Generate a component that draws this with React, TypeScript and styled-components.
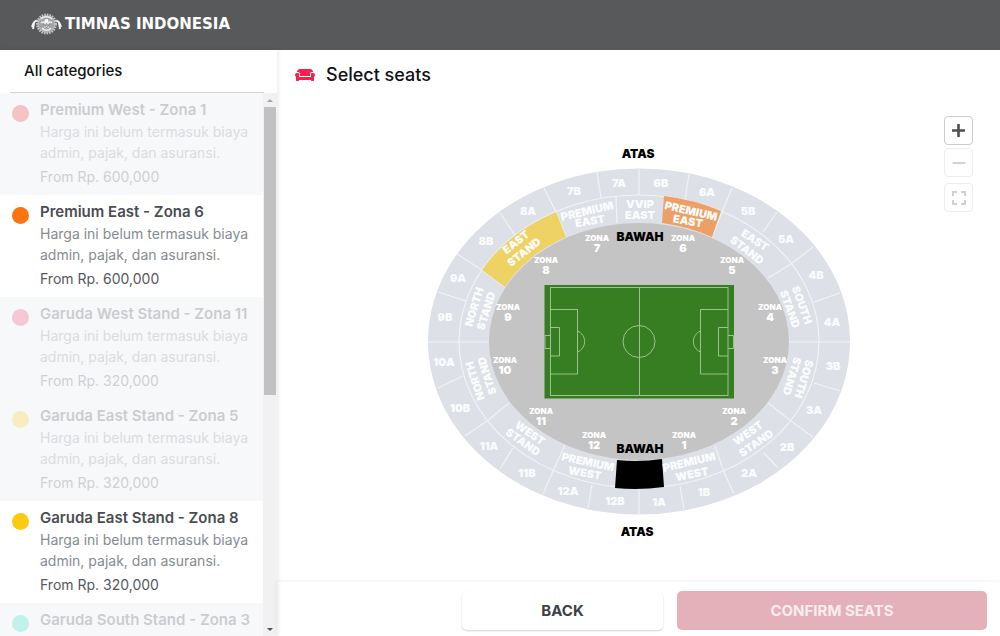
import React from "react";
import styled, { createGlobalStyle } from "styled-components";
import { FaCouch } from "react-icons/fa";
import { MdFullscreen, MdRemove } from "react-icons/md";

const GlobalStyle = createGlobalStyle`
  *, *::before, *::after { box-sizing: border-box; }
  body {
    margin: 0;
    font-family: Inter, "Liberation Sans", sans-serif;
    font-size: 14px;
    color: #101214;
    background: #fff;
  }
  h1, h2, h3, p, ul { margin: 0; padding: 0; }
  button { font: inherit; cursor: pointer; }
  button:disabled { cursor: default; }
`;

const Page = styled.div`
  display: flex;
  flex-direction: column;
  height: 100vh;
`;

const TopBar = styled.header`
  display: flex;
  align-items: center;
  flex: none;
  height: 50px;
  padding: 0 31px 3px;
  background: #58595b;
`;

const Brand = styled.a`
  display: flex;
  align-items: center;
  gap: 3px;
  color: #fff;
  font-family: "DejaVu Sans", sans-serif;
  font-size: 15px;
  font-weight: 700;
  line-height: 20px;
  text-decoration: none;
  white-space: nowrap;
`;

const Body = styled.div`
  display: flex;
  flex: 1;
  min-height: 0;
`;

const Sidebar = styled.aside`
  display: flex;
  flex-direction: column;
  flex: none;
  width: 277px;
  box-shadow: 1px 0 4px rgba(0, 0, 0, 0.1);
`;

const SidebarTitle = styled.h2`
  flex: none;
  margin: 0 13px 0 10px;
  padding: 10px 14px 11px;
  border-bottom: 1px solid #d3d4d6;
  font-size: 15px;
  font-weight: 500;
  line-height: 21px;
`;

const ListArea = styled.div`
  display: flex;
  flex: 1;
  min-height: 0;
`;

const CategoryList = styled.ul`
  flex: 1;
  min-width: 0;
  overflow: hidden;
  list-style: none;
`;

const Category = styled.li<{ $off: boolean }>`
  display: flex;
  align-items: flex-start;
  gap: 11px;
  padding: 6px 0 8px 12px;
  background: ${(p) => (p.$off ? "#f7f8fa" : "#fff")};

  & > * {
    opacity: ${(p) => (p.$off ? 0.25 : 1)};
  }
`;

const Dot = styled.span<{ $color: string }>`
  flex: none;
  width: 17px;
  height: 17px;
  margin-top: 6px;
  border-radius: 50%;
  background: ${(p) => p.$color};
`;

const CategoryText = styled.div`
  min-width: 0;
  line-height: 21px;
`;

const CategoryName = styled.h3`
  color: #4a4d52;
  font-size: 15px;
  font-weight: 600;
  line-height: 22px;
  white-space: nowrap;
`;

const CategoryNote = styled.p`
  color: #868b91;
`;

const CategoryPrice = styled.p`
  padding-top: 3px;
  color: #55585d;
`;

const ScrollTrack = styled.div`
  display: flex;
  flex-direction: column;
  align-items: center;
  flex: none;
  width: 14px;
  background: #f1f1f1;
`;

const ScrollThumb = styled.div`
  width: 12px;
  height: 53%;
  background: #c1c1c1;
`;

const ScrollArrow = styled.span<{ $down?: boolean }>`
  flex: none;
  width: 6px;
  height: 3px;
  margin: ${(p) => (p.$down ? "auto 0 5px" : "6px 0 5px")};
  clip-path: ${(p) =>
    p.$down ? "polygon(0 0, 100% 0, 50% 100%)" : "polygon(50% 0, 100% 100%, 0 100%)"};
  background: ${(p) => (p.$down ? "#505050" : "#a3a3a3")};
`;

const Main = styled.main`
  display: flex;
  flex-direction: column;
  flex: 1;
  min-width: 0;
`;

const Heading = styled.h1`
  display: flex;
  align-items: center;
  gap: 11px;
  flex: none;
  height: 48px;
  padding: 2px 18px 0;
  font-size: 18px;
  font-weight: 500;
  line-height: 24px;

  svg {
    color: #fb1f4b;
  }
`;

const MapArea = styled.section`
  position: relative;
  display: flex;
  align-items: center;
  justify-content: center;
  flex: 1;
  min-height: 0;
`;

const Stadium = styled.svg`
  width: 441px;
  max-width: 100%;
  max-height: 100%;
  font-family: Inter, "Liberation Sans", sans-serif;
  font-weight: 900;
  text-anchor: middle;
`;

const MapTools = styled.div`
  position: absolute;
  top: 18px;
  right: 27px;
  display: flex;
  flex-direction: column;
  gap: 3px;
`;

const ToolButton = styled.button<{ $apart?: boolean }>`
  display: flex;
  align-items: center;
  justify-content: center;
  width: 29px;
  height: 29px;
  margin-top: ${(p) => (p.$apart ? "3px" : "0")};
  padding: 0;
  border: 1px solid #c9cbce;
  border-radius: 4px;
  background: #fff;
  color: #4d4f53;

  &:disabled {
    border-color: #ececee;
    color: #cfcfd1;
  }
`;

const Footer = styled.footer`
  display: flex;
  justify-content: flex-end;
  gap: 14px;
  flex: none;
  padding: 9px 13px 6px;
  box-shadow: 0 -1px 4px rgba(0, 0, 0, 0.06);
`;

const ActionButton = styled.button<{ $primary?: boolean }>`
  width: ${(p) => (p.$primary ? "310px" : "201px")};
  height: 39px;
  padding: 0 0 1px;
  border: 0;
  border-radius: 5px;
  background: ${(p) => (p.$primary ? "#e4b1ba" : "#fff")};
  box-shadow: ${(p) => (p.$primary ? "none" : "0 1px 2px rgba(0, 0, 0, 0.18)")};
  color: ${(p) => (p.$primary ? "#fcedef" : "#3c4145")};
  font-size: 15px;
  font-weight: 700;
`;

const note = "Harga ini belum termasuk biaya admin, pajak, dan asuransi.";

const categories = [
  { name: "Premium West - Zona 1", price: "600,000", color: "#f0202c", off: true },
  { name: "Premium East - Zona 6", price: "600,000", color: "#fb7412", off: false },
  { name: "Garuda West Stand - Zona 11", price: "320,000", color: "#f0386a", off: true },
  { name: "Garuda East Stand - Zona 5", price: "320,000", color: "#fcca12", off: true },
  { name: "Garuda East Stand - Zona 8", price: "320,000", color: "#fcca12", off: false },
  { name: "Garuda South Stand - Zona 3", price: "320,000", color: "#1fdcc0", off: true },
];

type Point = [number, number];
type Label = [string, number, number, number?];

const dividers: Point[][] = [
  [[438, 292], [466, 301]],
  [[457, 254], [482, 270], [505, 287]],
  [[500, 213], [515, 235]],
  [[544, 188], [556, 212], [566, 237]],
  [[597, 172], [601, 198]],
  [[616, 196], [617, 223]],
  [[639, 169], [639, 195]],
  [[689, 174], [685, 200]],
  [[732, 188], [722, 212], [712, 237]],
  [[777, 212], [763, 232]],
  [[813, 247], [791, 264], [768, 278]],
  [[840, 293], [814, 302]],
  [[428, 342], [489, 342]],
  [[789, 342], [850, 342]],
  [[840, 391], [814, 383]],
  [[813, 437], [791, 421], [768, 403]],
  [[778, 468], [764, 453]],
  [[734, 494], [724, 472], [715, 446]],
  [[684, 509], [680, 486]],
  [[639, 488], [639, 514]],
  [[588, 508], [592, 485]],
  [[543, 494], [553, 471], [565, 445]],
  [[500, 469], [513, 448]],
  [[465, 436], [487, 421], [509, 403]],
  [[438, 388], [463, 376]],
];

const blocks: Label[] = [
  ["7B", 574, 191], ["7A", 619, 183], ["6B", 661, 183], ["6A", 707, 192],
  ["8A", 528, 211], ["5B", 748, 211], ["8B", 486, 241], ["5A", 786, 239],
  ["9A", 458, 278], ["4B", 816, 275], ["9B", 445, 317], ["4A", 832, 322],
  ["10A", 444, 362], ["3B", 833, 366], ["10B", 460, 408], ["3A", 814, 410],
  ["11A", 489, 446], ["2B", 787, 447], ["11B", 527, 473], ["2A", 749, 473],
  ["12A", 568, 491], ["1B", 704, 492], ["12B", 615, 501], ["1A", 659, 502],
];

const stands: Label[] = [
  ["PREMIUM", 587, 211, -13], ["EAST", 590, 221, -9],
  ["VVIP", 640, 204], ["EAST", 640, 215],
  ["PREMIUM", 691, 211, 13], ["EAST", 688, 221, 10],
  ["EAST", 755, 240, 33], ["STAND", 747, 250, 38],
  ["SOUTH", 802, 305, 70], ["STAND", 790, 309, 70],
  ["SOUTH", 804, 379, 107], ["STAND", 792, 376, 107],
  ["NORTH", 474, 307, -73], ["STAND", 486, 311, -73],
  ["NORTH", 475, 381, -108], ["STAND", 487, 376, -108],
  ["EAST", 516, 242, -38], ["STAND", 524, 252, -38],
  ["WEST", 530, 433, 35], ["STAND", 523, 442, 35],
  ["PREMIUM", 588, 462, 12], ["WEST", 585, 473, 10],
  ["PREMIUM", 689, 462, -13], ["WEST", 692, 474, -11],
  ["WEST", 748, 433, -35], ["STAND", 756, 443, -35],
];

const zones: Label[] = [
  ["7", 597, 238], ["6", 683, 238], ["8", 546, 260], ["5", 732, 260],
  ["9", 508, 307], ["4", 770, 307], ["10", 505, 360], ["3", 775, 360],
  ["11", 541, 411], ["2", 734, 411], ["12", 594, 435], ["1", 684, 435],
];

const captions: Label[] = [
  ["ATAS", 638, 154], ["BAWAH", 640, 237], ["BAWAH", 640, 449], ["ATAS", 637, 532],
];

function Labels({ items, size, fill }: { items: Label[]; size: number; fill: string }) {
  const drop = Math.round(size * 0.36);
  return (
    <g fontSize={size} fill={fill}>
      {items.map(([text, x, y, angle = 0], i) => (
        <text key={i} transform={`translate(${x} ${y}) rotate(${angle})`} y={drop}>
          {text}
        </text>
      ))}
    </g>
  );
}

function StadiumMap() {
  return (
    <Stadium viewBox="418 139 441 402" role="img" aria-label="Stadium seat map">
      <ellipse cx="639" cy="341.5" rx="211" ry="173" fill="#dde0e6" />
      <ellipse cx="639" cy="341.5" rx="150" ry="118.5" fill="#c4c4c4" />
      <g fill="none" stroke="#f1f2f5" strokeWidth="1.2">
        <ellipse cx="639" cy="341.5" rx="180" ry="146.5" />
        {dividers.map((line, i) => (
          <polyline key={i} points={line.map((p) => p.join(",")).join(" ")} />
        ))}
      </g>
      <path d="M482 270A180 146.5 0 0 1 556 212L566 237A150 118.5 0 0 0 505 287Z" fill="#efd264" />
      <path d="M664 196A180 146.5 0 0 1 721 211L712 237A150 118.5 0 0 0 662 223Z" fill="#ed9f65" />
      <path d="M617 460A150 118.5 0 0 0 662 459L664 487A180 146.5 0 0 1 615 488Z" fill="#000" />

      <rect x="544.5" y="285" width="189.5" height="113.5" fill="#377d22" />
      <g fill="none" stroke="#9cc48f" strokeWidth="1">
        <rect x="550.5" y="287.5" width="177.5" height="108" />
        <path d="M639.5 287.5V395.5" />
        <circle cx="639" cy="341.5" r="16" />
        <path d="M550.5 309.5H577.5V374H550.5M550.5 327.5H559.5V356H550.5M550.5 335.5H545V348.5H550.5M577.5 331C587 335 587 348 577.5 352" />
        <path d="M728 309.5H700.5V374H728M728 327.5H718.5V356H728M728 335.5H733.5V348.5H728M700.5 331C691 335 691 348 700.5 352" />
      </g>

      <Labels items={blocks} size={11} fill="#fbfcfd" />
      <Labels items={stands} size={11} fill="#fbfcfd" />
      <Labels items={zones.map(([, x, y]): Label => ["ZONA", x, y])} size={8} fill="#fff" />
      <Labels items={zones.map(([n, x, y]): Label => [n, x, y + 10])} size={11} fill="#fff" />
      <Labels items={captions} size={12} fill="#000" />
    </Stadium>
  );
}

function Emblem() {
  return (
    <svg width="31" height="26" viewBox="0 0 31 26" fill="none" aria-hidden="true">
      <path
        d="M1 16C2 11 5 9 7 10C9 11 9 13 12 13M30 16C29 11 26 9 24 10C22 11 22 13 19 13M3 12L2 18M28 12L29 18"
        stroke="#f2f2f2"
        strokeWidth="2"
      />
      <circle cx="15.5" cy="13" r="9" fill="#a2a3a4" stroke="#c4c4c5" strokeWidth="3" strokeDasharray="1.5 1" />
      <path
        d="M10 8C12 5 19 5 21 8M10 12C12 10 13 11 14.5 13M21 12C19 10 18 11 16.5 13M11 17C13 20 18 20 20 17M13 16H18"
        stroke="#ececec"
        strokeWidth="1.5"
      />
      <circle cx="15.5" cy="10" r="2" fill="#fff" />
      <path d="M12 13L15.5 17L19 13" stroke="#858688" />
    </svg>
  );
}

function PlusIcon() {
  return (
    <svg width="15" height="15" viewBox="0 0 15 15" aria-hidden="true">
      <path d="M7.5 1V14M1 7.5H14" stroke="currentColor" strokeWidth="2.6" />
    </svg>
  );
}

export default function App() {
  return (
    <Page>
      <GlobalStyle />
      <TopBar>
        <Brand href="#">
          <Emblem />
          TIMNAS INDONESIA
        </Brand>
      </TopBar>
      <Body>
        <Sidebar>
          <SidebarTitle>All categories</SidebarTitle>
          <ListArea>
            <CategoryList>
              {categories.map((c) => (
                <Category key={c.name} $off={c.off}>
                  <Dot $color={c.color} />
                  <CategoryText>
                    <CategoryName>{c.name}</CategoryName>
                    <CategoryNote>{note}</CategoryNote>
                    <CategoryPrice>From Rp. {c.price}</CategoryPrice>
                  </CategoryText>
                </Category>
              ))}
            </CategoryList>
            <ScrollTrack aria-hidden="true">
              <ScrollArrow />
              <ScrollThumb />
              <ScrollArrow $down />
            </ScrollTrack>
          </ListArea>
        </Sidebar>
        <Main>
          <Heading>
            <FaCouch size={20} aria-hidden="true" />
            Select seats
          </Heading>
          <MapArea>
            <StadiumMap />
            <MapTools>
              <ToolButton aria-label="Zoom in">
                <PlusIcon />
              </ToolButton>
              <ToolButton aria-label="Zoom out" disabled>
                <MdRemove size={22} />
              </ToolButton>
              <ToolButton aria-label="Fit to screen" disabled $apart>
                <MdFullscreen size={24} />
              </ToolButton>
            </MapTools>
          </MapArea>
          <Footer>
            <ActionButton>BACK</ActionButton>
            <ActionButton $primary disabled>
              CONFIRM SEATS
            </ActionButton>
          </Footer>
        </Main>
      </Body>
    </Page>
  );
}
